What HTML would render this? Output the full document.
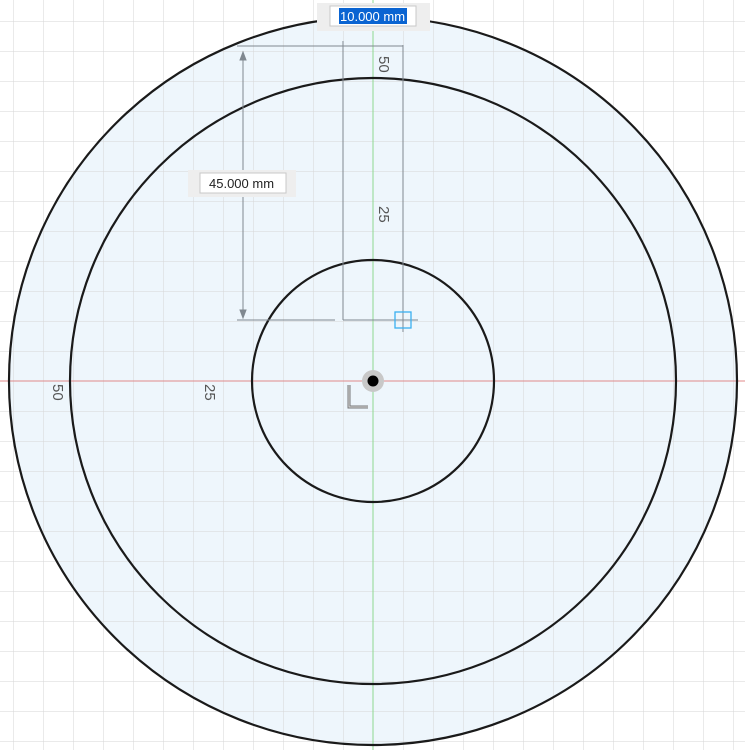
<!DOCTYPE html>
<html><head><style>
html,body{margin:0;padding:0;background:#fff;width:745px;height:750px;overflow:hidden;font-family:"Liberation Sans",sans-serif}
</style></head><body>
<svg width="745" height="750" viewBox="0 0 745 750" xmlns="http://www.w3.org/2000/svg">
<defs>
<pattern id="g" x="13" y="21" width="30" height="30" patternUnits="userSpaceOnUse">
<path d="M0 0H30M0 0V30" stroke="#d6d6d6" stroke-width="1" fill="none"/>
</pattern>
</defs>
<circle cx="373" cy="381" r="364" fill="#eef6fc"/>
<rect width="745" height="750" fill="url(#g)"/>
<line x1="0" y1="381" x2="745" y2="381" stroke="#e08a8a" stroke-width="1"/>
<line x1="373" y1="0" x2="373" y2="750" stroke="#8fd88f" stroke-width="1"/>
<g fill="none" stroke="#1a1a1a" stroke-width="2.2">
<circle cx="373" cy="381" r="364"/>
<circle cx="373" cy="381" r="303"/>
<circle cx="373" cy="381" r="121"/>
</g>
<g stroke="#808890" stroke-width="1" fill="none">
<path d="M343 45V320M403 45V332M237 46H403M237 320H335M343 320H418"/>
<path d="M243 52V318"/>
<path d="M240 60L243 52L246 60Z M240 310L243 318L246 310Z" fill="#808890"/>
<path d="M338 46H348M343 41V51"/>
</g>
<rect x="395" y="312" width="16" height="16" fill="none" stroke="#3ab0f0" stroke-width="1.3"/>
<circle cx="373" cy="381" r="11" fill="#c8c8c8"/>
<circle cx="373" cy="381" r="5.5" fill="#000"/>
<path d="M349 385V407H368" stroke="#777" stroke-width="3" fill="none"/>
<path d="M349 385V407H368" stroke="#ddd" stroke-width="1" fill="none"/>
<g fill="#555" font-size="15">
<text transform="translate(379 56) rotate(90)">50</text>
<text transform="translate(379 206) rotate(90)">25</text>
<text transform="translate(53 384) rotate(90)">50</text>
<text transform="translate(205 384) rotate(90)">25</text>
</g>
<rect x="188" y="170" width="108" height="27" fill="#eeeeee"/>
<rect x="200" y="173" width="86" height="20" fill="#fff" stroke="#c8c8c8"/>
<text x="209" y="188" font-size="13" fill="#222">45.000 mm</text>
<rect x="317" y="3" width="113" height="28" fill="#eeeeee"/>
<rect x="330" y="6" width="86" height="20" fill="#fff" stroke="#c8c8c8"/>
<rect x="339" y="8" width="68" height="16" fill="#0a64d2"/>
<text x="340" y="21" font-size="13" fill="#fff">10.000 mm</text>
</svg>
</body></html>
